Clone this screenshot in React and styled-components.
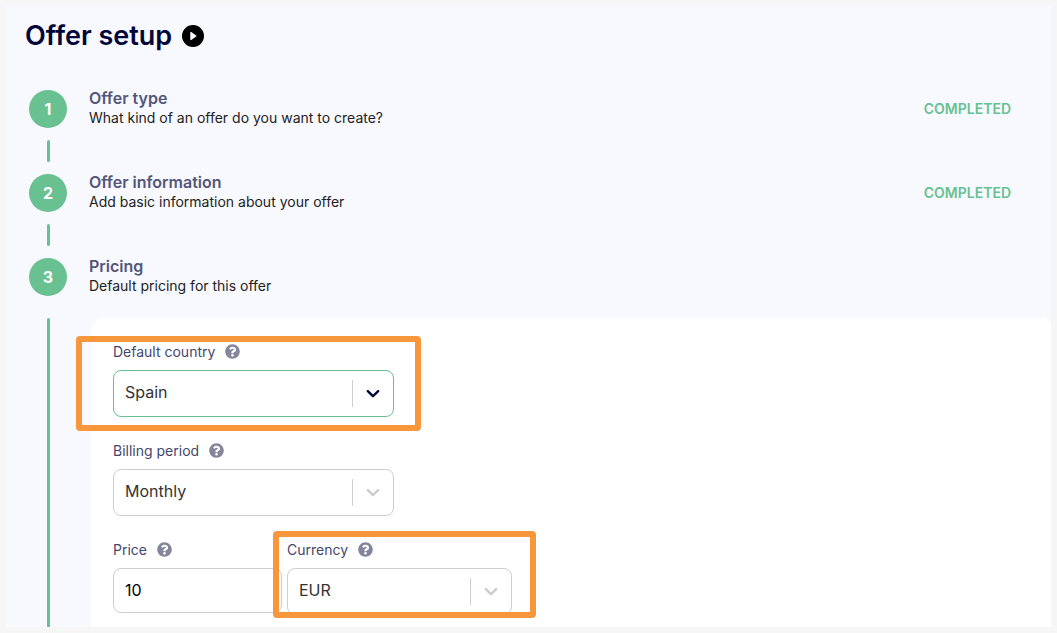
import React, { useState } from "react";
import styled, { createGlobalStyle } from "styled-components";
import { BsPlayCircleFill } from "react-icons/bs";
import { FaQuestionCircle } from "react-icons/fa";

const steps = [
    { title: "Offer type", text: "What kind of an offer do you want to create?", completed: true },
    { title: "Offer information", text: "Add basic information about your offer", completed: true },
    { title: "Pricing", text: "Default pricing for this offer", completed: false },
];

const Label = ({ htmlFor, children }) => (
    <LabelRow>
        <label htmlFor={htmlFor}>{children}</label>
        <HelpButton type="button" aria-label={`Help: ${children}`}>
            <FaQuestionCircle size={15} />
        </HelpButton>
    </LabelRow>
);

const SelectField = ({ id, label, options, active }) => {
    const [value, setValue] = useState(options[0]);

    return (
        <>
            <Label htmlFor={id}>{label}</Label>
            <SelectBox $active={active}>
                <select id={id} value={value} onChange={(e) => setValue(e.target.value)}>
                    {options.map((option) => (
                        <option key={option}>{option}</option>
                    ))}
                </select>
                <Indicator $active={active}>
                    <svg width="22" height="22" viewBox="0 0 20 20" aria-hidden="true">
                        <path d="M4.516 7.548c0.436-0.446 1.043-0.481 1.576 0l3.908 3.747 3.908-3.747c0.533-0.481 1.141-0.446 1.574 0 0.436 0.445 0.408 1.197 0 1.615-0.406 0.418-4.695 4.502-4.695 4.502-0.217 0.223-0.502 0.335-0.787 0.335s-0.57-0.112-0.789-0.335c0 0-4.287-4.084-4.695-4.502s-0.436-1.17 0-1.615z" />
                    </svg>
                </Indicator>
            </SelectBox>
        </>
    );
};

const App = () => {
    const [price, setPrice] = useState("10");

    return (
        <>
            <GlobalStyle />
            <Page>
                <Header>
                    <h1>Offer setup</h1>
                    <PlayButton type="button" aria-label="Play">
                        <BsPlayCircleFill size={22} />
                    </PlayButton>
                </Header>

                {steps.map((step, index) => (
                    <Step key={step.title}>
                        <Rail>
                            <Circle>{index + 1}</Circle>
                            {index < steps.length - 1 && <Line />}
                        </Rail>
                        <StepText>
                            <h2>{step.title}</h2>
                            <p>{step.text}</p>
                        </StepText>
                        {step.completed && <Status>COMPLETED</Status>}
                    </Step>
                ))}

                <StepBody>
                    <Rail>
                        <Line $long />
                    </Rail>
                    <Card>
                        <Field>
                            <SelectField id="country" label="Default country" options={["Spain", "France", "Germany"]} active />
                            <CountryMark />
                        </Field>
                        <Field>
                            <SelectField id="period" label="Billing period" options={["Monthly", "Yearly"]} />
                        </Field>
                        <PriceRow>
                            <PriceField>
                                <Label htmlFor="price">Price</Label>
                                <Input id="price" value={price} onChange={(e) => setPrice(e.target.value)} />
                            </PriceField>
                            <CurrencyField>
                                <SelectField id="currency" label="Currency" options={["EUR", "USD", "GBP"]} />
                                <CurrencyMark />
                            </CurrencyField>
                        </PriceRow>
                    </Card>
                </StepBody>
            </Page>
        </>
    );
};

export default App;

const GlobalStyle = createGlobalStyle`
  * {
    box-sizing: border-box;
  }

  body {
    margin: 0;
    background: #f6f6f6;
    font-family: Inter, "Liberation Sans", sans-serif;
  }

  h1, h2, p {
    margin: 0;
  }

  button {
    display: flex;
    padding: 0;
    border: 0;
    background: none;
    cursor: pointer;
  }
`;

const Page = styled.main`
  display: flex;
  flex-direction: column;
  min-height: 100vh;
  border: 6px solid #f6f6f6;
  background: #f8f9fe;
`;

const Header = styled.header`
  display: flex;
  align-items: center;
  gap: 10px;
  height: 60px;
  margin-bottom: 24px;
  padding-left: 19px;

  h1 {
    color: #03053a;
    font-size: 27px;
    font-weight: 600;
    line-height: 36px;
  }
`;

const PlayButton = styled.button`
  color: #000;
`;

const Step = styled.section`
  display: flex;
  align-items: flex-start;
  padding: 0 40px 0 23px;
`;

const Rail = styled.div`
  display: flex;
  flex-direction: column;
  align-items: center;
  flex-shrink: 0;
  width: 38px;
`;

const Circle = styled.div`
  display: flex;
  align-items: center;
  justify-content: center;
  width: 38px;
  height: 38px;
  border-radius: 50%;
  background: #69c090;
  color: #fff;
  font-size: 16px;
  font-weight: 700;
`;

const Line = styled.div`
  width: 3px;
  height: 22px;
  margin: ${({ $long }) => ($long ? "0" : "12px 0")};
  border-radius: ${({ $long }) => ($long ? "2px 2px 0 0" : "2px")};
  background: #69c090;
  flex-grow: ${({ $long }) => ($long ? 1 : 0)};
`;

const StepText = styled.div`
  flex: 1;
  padding-left: 22px;

  h2 {
    margin-bottom: 2px;
    color: #53557a;
    font-size: 16px;
    font-weight: 600;
    line-height: 16px;
  }

  p {
    color: #222;
    font-size: 14px;
    line-height: 20px;
  }
`;

const Status = styled.span`
  color: #69c090;
  font-size: 14px;
  font-weight: 600;
  line-height: 38px;
`;

const StepBody = styled.div`
  display: flex;
  flex: 1;
  margin-top: 22px;
  padding-left: 23px;
`;

const Card = styled.div`
  flex: 1;
  margin-left: 24px;
  padding: 23px 22px 12px;
  border-radius: 14px 8px 0 0;
  background: #fff;
`;

const Field = styled.div`
  position: relative;
  width: 281px;
  max-width: 100%;
  margin-bottom: 23px;
`;

const PriceRow = styled.div`
  display: flex;
  gap: 5px;
`;

const PriceField = styled.div`
  width: 169px;
`;

const CurrencyField = styled.div`
  position: relative;
  width: 225px;
`;

const LabelRow = styled.div`
  display: flex;
  align-items: center;
  gap: 10px;
  height: 20px;
  margin-bottom: 9px;
  color: #44476d;
  font-size: 14px;
`;

const HelpButton = styled.button`
  color: #83859b;
`;

const SelectBox = styled.div`
  position: relative;
  height: 47px;
  border: 1px solid ${({ $active }) => ($active ? "#69c090" : "#cdcdd6")};
  border-radius: 8px;
  background: #fff;

  select {
    width: 100%;
    height: 100%;
    padding: 0 52px 4px 11px;
    border: 0;
    outline: 0;
    background: transparent;
    color: #333;
    font-family: inherit;
    font-size: 16px;
    appearance: none;
  }
`;

const Indicator = styled.span`
  position: absolute;
  top: 9px;
  right: 0;
  display: flex;
  align-items: center;
  justify-content: center;
  width: 41px;
  height: 27px;
  padding-bottom: 2px;
  border-left: 1px solid #cdcdd6;
  color: ${({ $active }) => ($active ? "#03053a" : "#ccc")};
  pointer-events: none;

  svg {
    fill: currentColor;
  }
`;

const Input = styled.input`
  width: 100%;
  height: 45px;
  padding: 0 11px 2px;
  border: 1px solid #cdcdd6;
  border-radius: 8px;
  background: #fff;
  color: #000;
  font-family: inherit;
  font-size: 16px;
`;

const Mark = styled.div`
  position: absolute;
  border: 6px solid #f8963c;
  border-radius: 4px;
  pointer-events: none;
`;

const CountryMark = styled(Mark)`
  inset: -5px -27px -14px -37px;
`;

const CurrencyMark = styled(Mark)`
  inset: -8px -24px -3px -14px;
`;
